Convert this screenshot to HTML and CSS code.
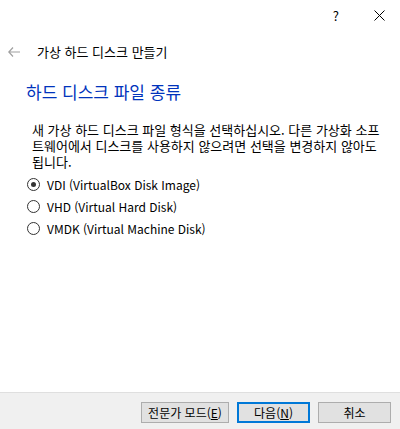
FILE: index.html
```html
<!DOCTYPE html>
<html lang="ko">
<head>
<meta charset="utf-8">
<link rel="stylesheet" href="styles.css">
</head>
<body>
<div class="window">
  <div class="titlebar">
    <span class="help">?</span>
    <span class="close">
      <svg width="11" height="11" viewBox="0 0 11 11"><path d="M0.5 0.5L10.5 10.5M10.5 0.5L0.5 10.5" stroke="#000" stroke-width="1" fill="none"/></svg>
    </span>
  </div>
  <div class="nav">
    <svg class="back" width="12" height="10" viewBox="0 0 12 10"><path d="M5 0.5L0.8 5L5 9.5M0.8 5H12" stroke="#a0a0a0" stroke-width="1.2" fill="none"/></svg>
    <span class="nav-title">가상 하드 디스크 만들기</span>
  </div>
  <div class="content">
    <h1 class="heading">하드 디스크 파일 종류</h1>
    <p class="desc">새 가상 하드 디스크 파일 형식을 선택하십시오. 다른 가상화 소프트웨어에서 디스크를 사용하지 않으려면 선택을 변경하지 않아도 됩니다.</p>
    <div class="options">
      <label class="option"><span class="radio checked"></span>VDI (VirtualBox Disk Image)</label>
      <label class="option"><span class="radio"></span>VHD (Virtual Hard Disk)</label>
      <label class="option"><span class="radio"></span>VMDK (Virtual Machine Disk)</label>
    </div>
  </div>
  <div class="footer">
    <button class="btn btn-expert">전문가 모드(<u>E</u>)</button>
    <button class="btn btn-default">다음(<u>N</u>)</button>
    <button class="btn btn-cancel">취소</button>
  </div>
</div>
</body>
</html>
```
FILE: styles.css
```css
html, body {
  margin: 0;
  padding: 0;
}
body {
  width: 400px;
  height: 429px;
  background: #ffffff;
  font-family: "Noto Sans CJK KR", "Noto Sans", sans-serif;
  font-size: 12px;
  color: #000;
  overflow: hidden;
}
.window {
  height: 429px;
  display: flex;
  flex-direction: column;
}
.titlebar {
  height: 30px;
  display: flex;
  align-items: center;
  justify-content: flex-end;
  padding-right: 15px;
}
.help {
  font-size: 13px;
  margin-right: 35px;
  line-height: 1;
}
.close {
  display: flex;
}
.nav {
  height: 16px;
  margin-top: 14px;
  display: flex;
  align-items: center;
  padding-left: 8px;
}
.back {
  margin-right: 17px;
}
.nav-title {
  font-size: 13px;
  line-height: 16px;
}
.content {
  padding: 0 20px 0 26px;
}
.heading {
  margin: 22px 0 0 0;
  font-size: 17px;
  font-weight: normal;
  line-height: 20px;
  color: #0033bc;
}
.desc {
  margin: 20px 0 0 6px;
  font-size: 13px;
  line-height: 16px;
}
.options {
  margin-top: 6px;
  display: flex;
  flex-direction: column;
  gap: 6px;
}
.option {
  display: flex;
  align-items: center;
  height: 16px;
  padding-left: 1px;
}
.radio {
  width: 11px;
  height: 11px;
  border: 1px solid #333;
  border-radius: 50%;
  margin-right: 7px;
  box-sizing: content-box;
  position: relative;
  background: #fff;
}
.radio.checked::after {
  content: "";
  position: absolute;
  left: 3px;
  top: 3px;
  width: 5px;
  height: 5px;
  border-radius: 50%;
  background: #333;
}
.footer {
  margin-top: auto;
  box-sizing: border-box;
  height: 37px;
  border-top: 1px solid #dfdfdf;
  background: #f0f0f0;
  display: flex;
  justify-content: flex-end;
  align-items: flex-start;
  padding: 9px 9px 0 0;
  gap: 8px;
}
.btn {
  height: 21px;
  margin: 0;
  padding: 0;
  font-family: inherit;
  font-size: 12px;
  line-height: 1;
  background: #e1e1e1;
  border: 1px solid #adadad;
  color: #000;
}
.btn u {
  text-decoration: underline;
}
.btn-expert {
  width: 88px;
}
.btn-default {
  width: 73px;
  border: 2px solid #0078d7;
}
.btn-cancel {
  width: 73px;
}
```
